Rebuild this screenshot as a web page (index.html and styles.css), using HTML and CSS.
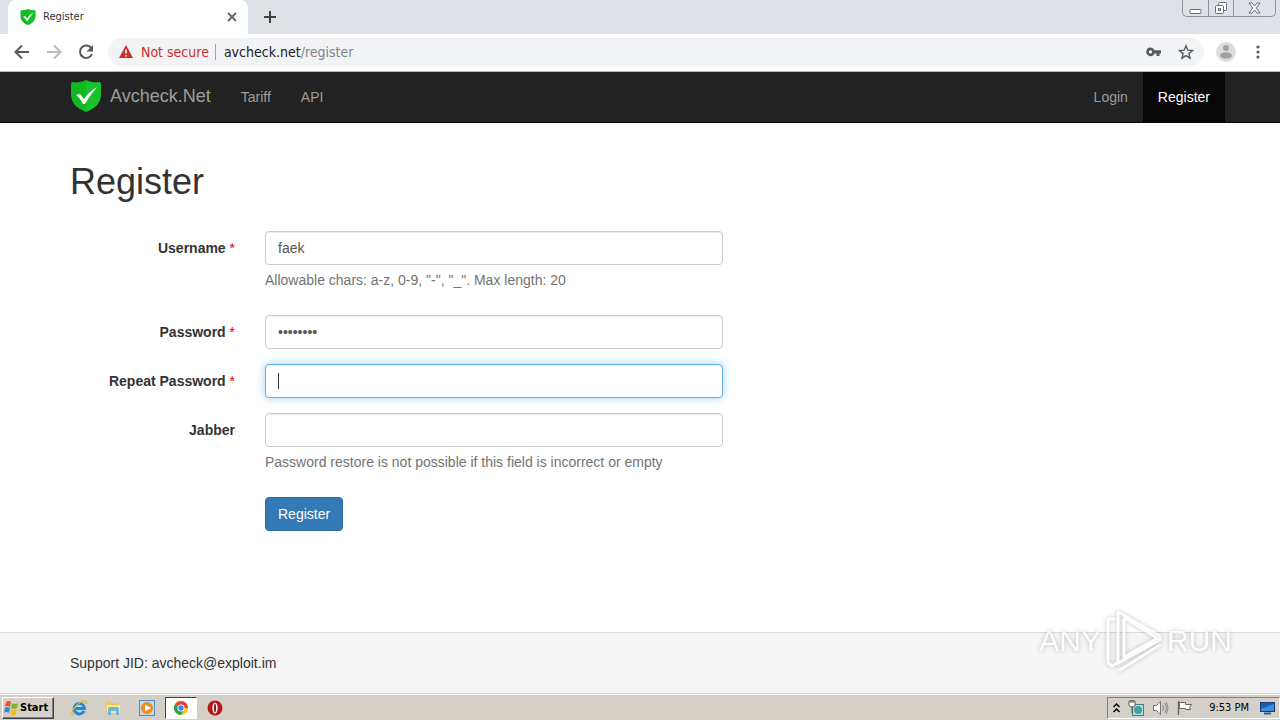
FILE: index.html
```html
<!DOCTYPE html>
<html lang="en">
<head>
  <meta charset="UTF-8" />
  <meta name="viewport" content="width=device-width, initial-scale=1.0"/>
  <title>Register</title>
  <link rel="stylesheet" href="styles.css">
</head>
<body>
  <!-- shared shield logo -->
  <svg class="defs" width="0" height="0" aria-hidden="true">
    <symbol id="shield" viewBox="0 0 30 32">
      <path fill="#12b824" d="M15 0c4 2 9 3 14 2 1 2 1 3 1 5v7c0 10-7 15-15 18C7 29 0 24 0 14V7c0-2 0-3 1-5 5 1 10 0 14-2z"/>
      <path fill="#24d338" opacity=".4" d="M15 0c4 2 9 3 14 2 1 2 1 3 1 5v7c0 10-7 15-15 18z"/>
      <path fill="#fff" d="M5 15l4-1 4 5c3-5 7-8 13-12-4 5-8 10-12 17h-2c-2-4-4-7-7-9z"/>
    </symbol>
  </svg>

  <div class="tabstrip">
    <div class="tab">
      <svg width="16" height="16"><use href="#shield"/></svg>
      <span class="tab-title">Register</span>
      <button class="icon-btn" aria-label="Close tab">
        <svg width="10" height="10" viewBox="0 0 10 10"><path d="M1 1l8 8M9 1L1 9" stroke="#5f6368" stroke-width="1.8"/></svg>
      </button>
    </div>
    <button class="icon-btn new-tab" aria-label="New tab">
      <svg width="12" height="12" viewBox="0 0 12 12"><path d="M6 0v12M0 6h12" stroke="#3c4043" stroke-width="2"/></svg>
    </button>
    <div class="window-controls">
      <button aria-label="Minimize">
        <svg width="13" height="14" viewBox="0 0 13 14"><rect x="1" y="8.5" width="11" height="4" rx="1" fill="#fff" stroke="#656b76"/></svg>
      </button>
      <button aria-label="Restore">
        <svg width="14" height="14" viewBox="0 0 14 14"><rect x="4.5" y="1.5" width="8" height="8" rx="1" fill="#fff" stroke="#656b76"/><rect x="1.5" y="4.5" width="8" height="8" rx="1" fill="#fff" stroke="#656b76"/><rect x="4.5" y="7.5" width="2" height="2" fill="none" stroke="#656b76"/></svg>
      </button>
      <button class="wide" aria-label="Close">
        <svg width="13" height="12" viewBox="0 0 13 12"><path d="M1 1h3l2.5 3L9 1h3L8.3 6l3.700 5H9L6.5 8 4 11H1l3.700-5z" fill="#fff" stroke="#656b76"/></svg>
      </button>
    </div>
  </div>

  <div class="toolbar">
    <button class="icon-btn" aria-label="Back">
      <svg width="16" height="16" viewBox="0 0 16 16"><path d="M15 8H2M8 1.5L1.5 8 8 14.5" fill="none" stroke="#55595e" stroke-width="2"/></svg>
    </button>
    <button class="icon-btn" aria-label="Forward">
      <svg width="16" height="16" viewBox="0 0 16 16"><path d="M1 8h13M8 1.5L14.5 8 8 14.5" fill="none" stroke="#b9bbbe" stroke-width="2"/></svg>
    </button>
    <button class="icon-btn" aria-label="Reload">
      <svg width="16" height="16" viewBox="0 0 16 16"><path d="M13.5 4.5A6.200 6.200 0 1 0 14 10" fill="none" stroke="#55595e" stroke-width="2"/><path d="M15 1v6.5H8.5z" fill="#55595e"/></svg>
    </button>
    <div class="omnibox">
      <svg width="14" height="13" viewBox="0 0 14 13"><path d="M7 0l7 13H0z" fill="#cb2f2a"/><path d="M7 4.5V8.5M7 10v1.5" stroke="#f1f3f4" stroke-width="1.6"/></svg>
      <span class="not-secure">Not secure</span>
      <div class="url" role="textbox" aria-label="Address">avcheck.net<span>/register</span></div>
      <button class="icon-btn" aria-label="Saved passwords">
        <svg width="16" height="10" viewBox="0 0 16 10"><path fill="#55595e" fill-rule="evenodd" d="M4.5.5a4.300 4.300 0 0 1 4 2.800H15v3.200h-1.500V9h-3V6.500h-2A4.300 4.300 0 1 1 4.500.5zm0 2.700a1.700 1.700 0 1 0 0 3.400 1.700 1.700 0 0 0 0-3.400z"/></svg>
      </button>
      <button class="icon-btn" aria-label="Bookmark">
        <svg width="16" height="16" viewBox="0 0 16 16"><path d="M8 1.800l1.800 4.400 4.700.4-3.600 3 1.100 4.600L8 11.700l-4 2.500 1.100-4.600-3.600-3 4.700-.4z" fill="none" stroke="#55595e" stroke-width="1.4"/></svg>
      </button>
    </div>
    <button class="icon-btn" aria-label="Profile">
      <svg width="20" height="20" viewBox="0 0 20 20"><circle cx="10" cy="10" r="10" fill="#dcddde"/><circle cx="10" cy="6" r="3" fill="#a0a2a5"/><ellipse cx="10" cy="13.5" rx="6" ry="3.200" fill="#a0a2a5"/></svg>
    </button>
    <button class="icon-btn menu" aria-label="Menu">
      <svg width="4" height="14" viewBox="0 0 4 14"><g fill="#55595e"><circle cx="2" cy="2" r="1.600"/><circle cx="2" cy="7" r="1.600"/><circle cx="2" cy="12" r="1.600"/></g></svg>
    </button>
  </div>

  <nav class="navbar">
    <div class="container">
      <a class="brand" href="#">
        <svg width="30" height="32"><use href="#shield"/></svg>
        Avcheck.Net
      </a>
      <a href="#">Tariff</a>
      <a href="#">API</a>
      <div class="nav-right">
        <a href="#">Login</a>
        <a class="active" href="#">Register</a>
      </div>
    </div>
  </nav>

  <main class="container">
    <h1>Register</h1>
    <form>
      <div class="form-group">
        <label for="username">Username <span class="required">*</span></label>
        <div class="field">
          <input id="username" type="text" value="faek" maxlength="20">
          <p class="help">Allowable chars: a-z, 0-9, "-", "_". Max length: 20</p>
        </div>
      </div>
      <div class="form-group">
        <label for="password">Password <span class="required">*</span></label>
        <div class="field">
          <input id="password" type="password" value="12345678">
        </div>
      </div>
      <div class="form-group">
        <label for="repeat">Repeat Password <span class="required">*</span></label>
        <div class="field focused">
          <input id="repeat" type="password">
        </div>
      </div>
      <div class="form-group">
        <label for="jabber">Jabber</label>
        <div class="field">
          <input id="jabber" type="text">
          <p class="help">Password restore is not possible if this field is incorrect or empty</p>
        </div>
      </div>
      <div class="form-group">
        <button class="submit" type="button">Register</button>
      </div>
    </form>
  </main>

  <footer>
    <div class="container">Support JID: avcheck@exploit.im</div>
    <div class="watermark">
      <span>ANY</span>
      <svg width="58" height="64" viewBox="0 0 58 64">
        <g fill="none" stroke="#fff" stroke-width="3" stroke-linejoin="round" stroke-linecap="round">
          <path d="M9 10H3v44l4 3 5-3"/>
          <path d="M13 54V3l42 24v4L20 9"/>
          <path d="M19 11v37l32-18"/>
          <path d="M13 54l40-22M15 61l40-25"/>
        </g>
      </svg>
      <span>RUN</span>
    </div>
  </footer>

  <div class="taskbar">
    <button class="start">
      <svg width="16" height="16" viewBox="0 0 16 16"><path d="M3 2q3-2 5 0L7 7Q4 5 2 7z" fill="#e8582c"/><path d="M9 3q3 2 6 0l-1 5q-3 2-6 0z" fill="#7db72f"/><path d="M2 8q2-2 5 0l-1 5q-3-2-5 0z" fill="#3a86d0"/><path d="M8 9q3 2 6 0l-1 5q-3 2-6 0z" fill="#f5b921"/></svg>
      Start
    </button>
    <button class="task" aria-label="Internet Explorer">
      <svg width="16" height="16" viewBox="0 0 16 16"><path d="M13 11A5.200 5.200 0 1 1 13.500 8.500H4" fill="none" stroke="#2487d8" stroke-width="3"/><path d="M2 15C-1 13 4 5 10 2c4-2 6-1 5 2" fill="none" stroke="#e3b52b" stroke-width="1.300"/></svg>
    </button>
    <button class="task" aria-label="Explorer">
      <svg width="16" height="16" viewBox="0 0 16 16"><path d="M1 2h5l1 1h7v11H1z" fill="#e9c963"/><path d="M2 5h13v8H2z" fill="#f8e69a"/><path d="M3 15V9q0-2 2-2h7q2 0 2 2v6h-3v-4H6v4z" fill="#72b5dc"/></svg>
    </button>
    <button class="task" aria-label="Media Player">
      <svg width="16" height="16" viewBox="0 0 16 16"><rect x=".5" y=".5" width="15" height="15" fill="#b9dcf2" stroke="#4e91c5"/><circle cx="8" cy="8" r="6" fill="#f28a1c"/><path d="M6 4.5v7L12 8z" fill="#fff"/></svg>
    </button>
    <button class="task running" aria-label="Chrome">
      <svg width="16" height="16" viewBox="0 0 16 16"><circle cx="8" cy="8" r="7" fill="#fbc116"/><path d="M8 8L1.900 4.500A7 7 0 0 1 14.100 4.500L15 8z" fill="#e04434"/><path d="M1.900 4.500A7 7 0 0 0 8 15l3-5-3-2z" fill="#2da44e"/><circle cx="8" cy="8" r="3.600" fill="#fff"/><circle cx="8" cy="8" r="2.700" fill="#4285f4"/></svg>
    </button>
    <button class="task" aria-label="Opera">
      <svg width="16" height="16" viewBox="0 0 16 16"><circle cx="8" cy="8" r="7.5" fill="#b3171b"/><ellipse cx="8" cy="8" rx="2.600" ry="5.500" fill="#fff"/><ellipse cx="8" cy="8" rx="1" ry="4.500" fill="#8e1013"/></svg>
    </button>
    <div class="tray">
      <svg width="7" height="10" viewBox="0 0 7 10"><path d="M.5 4l3-3 3 3M.5 9l3-3 3 3" fill="none" stroke="#000" stroke-width="1.5"/></svg>
      <svg width="16" height="16" viewBox="0 0 16 16"><rect x="4.500" y="4.500" width="11" height="11" fill="#b8dbe0" stroke="#56777b"/><circle cx="10" cy="10" r="4" fill="#3ba69c"/><path d="M1 1h6v4q0 2-3 2T1 5z" fill="#fff" stroke="#555"/><path d="M3 0v3M5 0v3M4 7v6" stroke="#555"/></svg>
      <svg width="17" height="16" viewBox="0 0 17 16"><path d="M1.500 5.500h3l4-4v13l-4-4h-3z" fill="#f8f8f8" stroke="#777"/><path d="M10.500 5q2 3 0 6M12.500 3q3.500 5 0 10M14.500 2q3 6 0 12" fill="none" stroke="#888"/></svg>
      <svg width="16" height="16" viewBox="0 0 16 16"><path d="M1.500 1v14" stroke="#666" stroke-width="1.400"/><path d="M2.500 2.500h6v2h6l-2 3 1 2h-5v-1h-6z" fill="#fff" stroke="#666"/></svg>
      <time>9:53 PM</time>
      <svg width="15" height="14" viewBox="0 0 15 14"><rect x=".5" y="1.500" width="14" height="9" fill="#1b5fb4" stroke="#173c74"/><path d="M1 8l13-5v7H1z" fill="#3c8be0"/><path d="M4 12.500h7" stroke="#3d5a85" stroke-width="2"/></svg>
    </div>
  </div>
</body>
</html>
```

FILE: styles.css
```css
* {
  box-sizing: border-box;
}

body {
  display: flex;
  flex-direction: column;
  min-height: 100vh;
  margin: 0;
  background: #fff;
  color: #333;
  font-family: "Liberation Sans", Arial, sans-serif;
  font-size: 14px;
  line-height: 20px;
}

a {
  text-decoration: none;
}

button {
  padding: 0;
  border: none;
  background: none;
  font: inherit;
  cursor: pointer;
}

svg {
  display: block;
  flex: none;
}

.defs {
  position: absolute;
}

.icon-btn {
  display: flex;
}

/* browser chrome */
.tabstrip,
.toolbar,
.taskbar {
  display: flex;
  font-family: "DejaVu Sans Condensed", "DejaVu Sans", Tahoma, sans-serif;
}

.tabstrip {
  height: 34px;
  padding-left: 8px;
  background: #dee1e6;
}

.tab {
  display: flex;
  align-items: center;
  gap: 7px;
  width: 240px;
  padding: 0 11px 0 12px;
  border-radius: 8px 8px 0 0;
  background: #fff;
  font-size: 11px;
}

.tab-title {
  flex: 1;
}

.new-tab {
  align-items: center;
  margin-left: 16px;
}

.window-controls {
  display: flex;
  height: 17px;
  margin: 0 4px 0 auto;
  border: 1px solid #8d929c;
  border-top: none;
  border-radius: 0 0 5px 5px;
}

.window-controls button {
  display: flex;
  align-items: center;
  justify-content: center;
  width: 25px;
}

.window-controls button + button {
  border-left: 1px solid #8d929c;
}

.window-controls .wide {
  width: 42px;
}

.toolbar {
  align-items: center;
  gap: 16px;
  height: 38px;
  padding: 0 20px 2px 14px;
  border-bottom: 1px solid #b4b6b8;
  font-size: 14px;
}

.omnibox {
  display: flex;
  flex: 1;
  align-items: center;
  gap: 8px;
  height: 28px;
  margin: 0 -4px 0 -2px;
  padding: 0 10px 0 11px;
  border-radius: 14px;
  background: #f1f3f4;
}

.omnibox .icon-btn + .icon-btn {
  margin-left: 8px;
}

.menu {
  margin-left: 4px;
}

.not-secure {
  padding-right: 7px;
  color: #cb2f2a;
  background: linear-gradient(#9aa0a6, #9aa0a6) right center / 1px 16px no-repeat;
}

.url {
  flex: 1;
  color: #202124;
}

.url span {
  color: #80868b;
}

/* site navbar */
.container {
  width: 100%;
  max-width: 1170px;
  margin: 0 auto;
  padding: 0 15px;
}

.navbar {
  border-bottom: 1px solid #080808;
  background: #222;
}

.navbar .container,
.nav-right {
  display: flex;
}

.navbar a {
  padding: 15px;
  color: #9d9d9d;
}

.navbar .brand {
  display: flex;
  align-items: center;
  gap: 9px;
  padding: 0 15px 2px 1px;
  font-size: 18px;
}

.nav-right {
  margin: 0 -15px 0 auto;
}

.navbar .active {
  background: #080808;
  color: #fff;
}

/* register form */
main {
  flex: 1;
}

h1 {
  margin: 39px 0 29px;
  font-size: 36px;
  font-weight: 500;
  line-height: 40px;
}

.form-group {
  display: grid;
  grid-template-columns: 165px minmax(0, 458px);
  column-gap: 30px;
  margin-bottom: 15px;
}

label {
  padding-top: 7px;
  font-size: 14px;
  font-weight: bold;
  text-align: right;
}

.required {
  color: #e00000;
  font-weight: normal;
}

.field {
  position: relative;
}

.field input {
  display: block;
  width: 100%;
  height: 34px;
  padding: 6px 12px;
  border: 1px solid #ccc;
  border-radius: 4px;
  color: #555;
  font: inherit;
  box-shadow: inset 0 1px 1px rgba(0, 0, 0, 0.075);
}

.focused input {
  border-color: #66afe9;
  box-shadow: inset 0 1px 1px rgba(0, 0, 0, 0.075), 0 0 8px rgba(102, 175, 233, 0.6);
}

/* text cursor */
.focused::after {
  content: "";
  position: absolute;
  top: 9px;
  left: 13px;
  width: 1px;
  height: 16px;
  background: #333;
}

.help {
  margin: 5px 0 10px;
  color: #737373;
}

.submit {
  grid-column: 2;
  justify-self: start;
  padding: 6px 12px;
  border: 1px solid #2e6da4;
  border-radius: 4px;
  background: #337ab7;
  color: #fff;
}

footer {
  position: relative;
  padding: 20px 0;
  border-top: 1px solid #ddd;
  background: #f5f5f5;
}

.watermark {
  position: absolute;
  right: 48px;
  bottom: 20px;
  display: flex;
  align-items: center;
  gap: 4px;
  color: #fff;
  font-size: 30px;
  line-height: 64px;
  opacity: 0.8;
  filter: drop-shadow(0 0 2px rgba(0, 0, 0, 0.3));
}

/* desktop taskbar */
.taskbar {
  align-items: center;
  height: 27px;
  padding: 2px 0 0 2px;
  border-top: 1px solid #d4d0c8;
  background: #d4d0c8;
  box-shadow: inset 0 1px #fff;
  color: #000;
  font-size: 11px;
}

.start {
  display: flex;
  align-items: center;
  gap: 1px;
  width: 52px;
  height: 22px;
  margin-right: 9px;
  border: 1px solid;
  border-color: #fff #404040 #404040 #fff;
  box-shadow: inset -1px -1px #808080;
  font-weight: bold;
}

.task {
  display: flex;
  align-items: center;
  justify-content: center;
  width: 32px;
  height: 22px;
  margin-right: 2px;
}

.running {
  border: 1px solid;
  border-color: #404040 #fff #fff #404040;
  background: #fff;
}

.tray {
  display: flex;
  align-items: center;
  gap: 8px;
  height: 22px;
  margin-left: auto;
  padding: 0 4px 0 5px;
  border: 1px solid;
  border-color: #808080 #fff #fff #808080;
}

.tray time {
  margin: 0 3px 0 8px;
}
```
